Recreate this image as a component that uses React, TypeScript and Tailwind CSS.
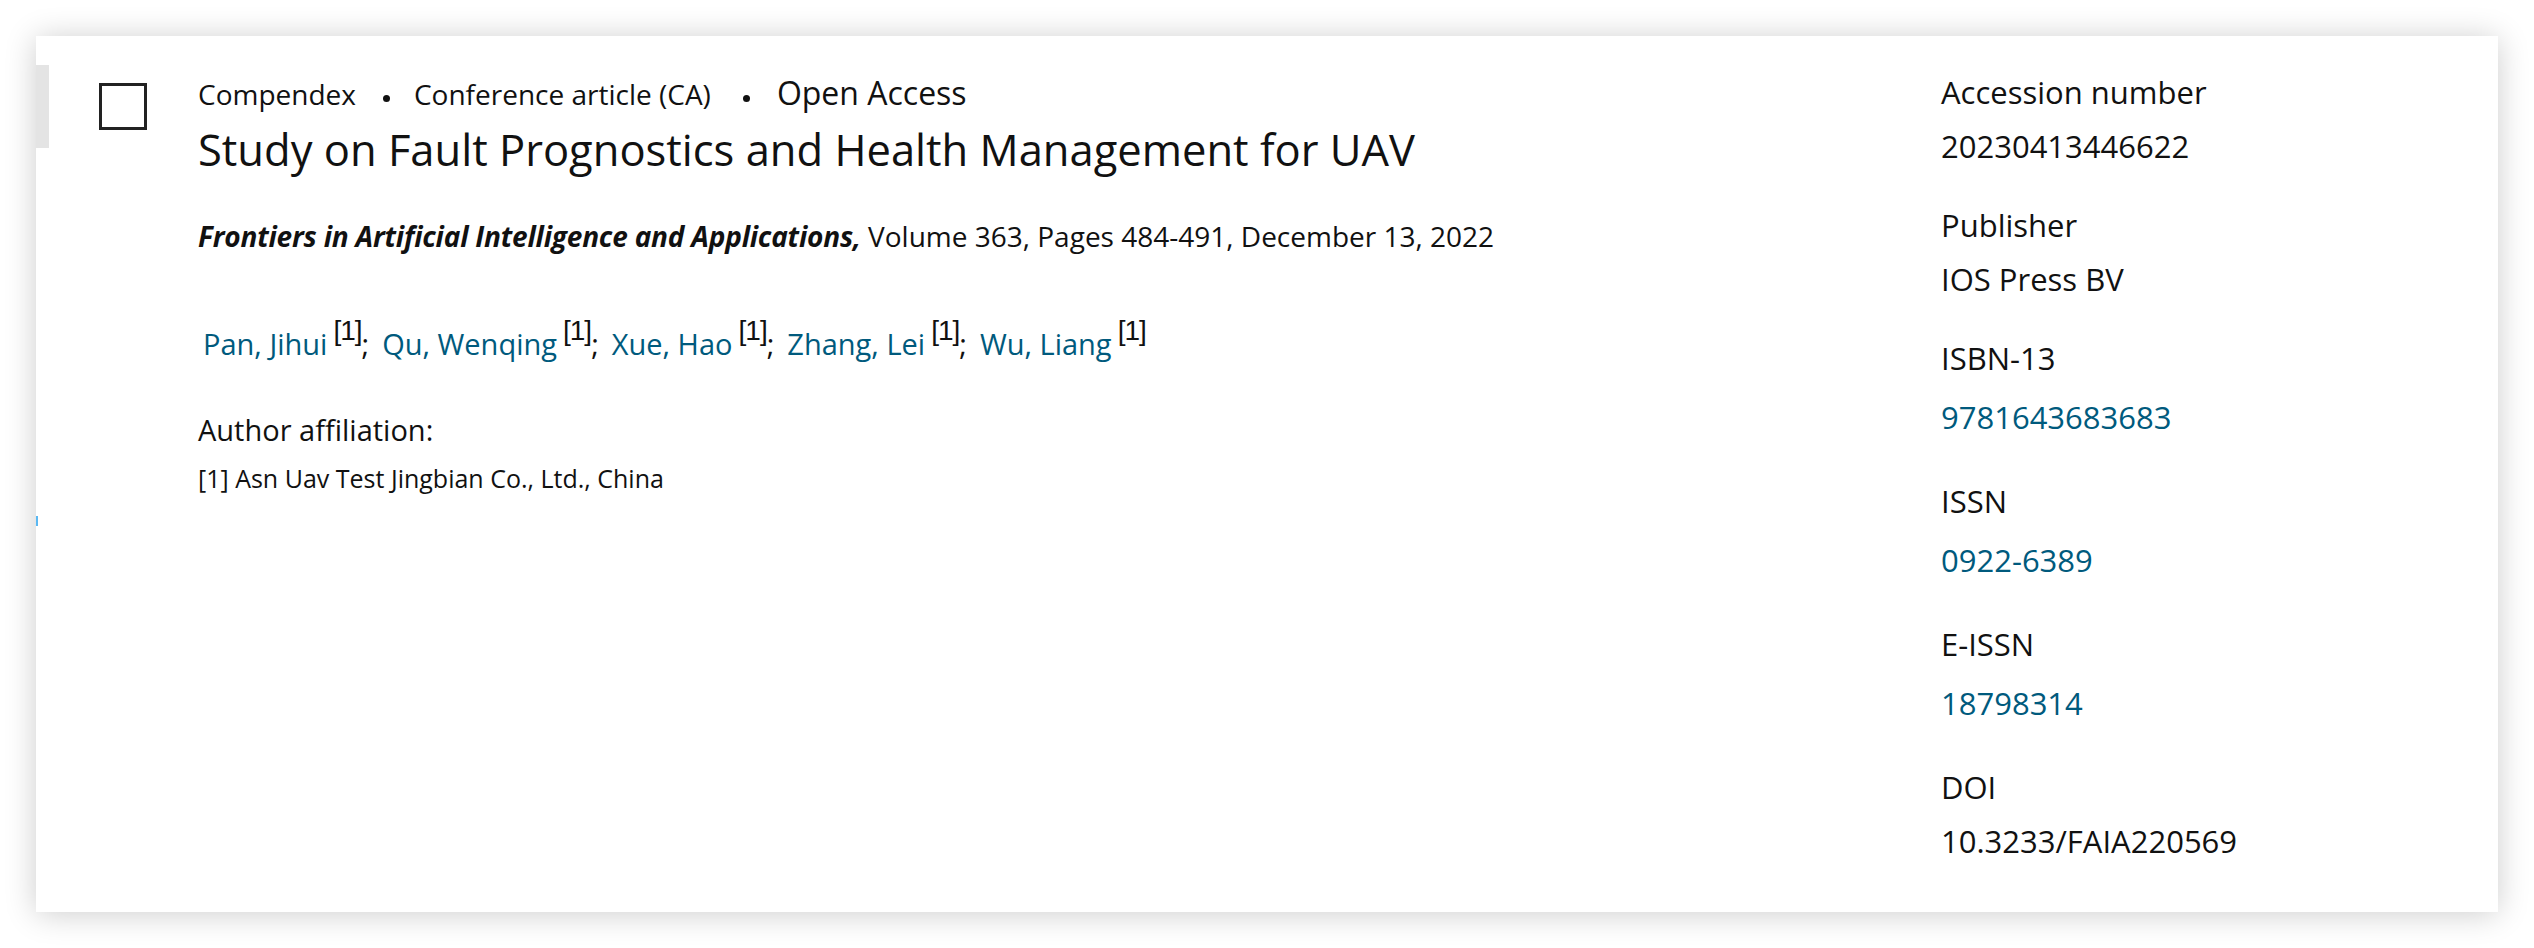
const authors = ['Pan, Jihui', 'Qu, Wenqing', 'Xue, Hao', 'Zhang, Lei', 'Wu, Liang']

const details = [
  { label: 'Accession number', value: '20230413446622', link: false },
  { label: 'Publisher', value: 'IOS Press BV', link: false },
  { label: 'ISBN-13', value: '9781643683683', link: true },
  { label: 'ISSN', value: '0922-6389', link: true },
  { label: 'E-ISSN', value: '18798314', link: true },
  { label: 'DOI', value: '10.3233/FAIA220569', link: false },
]

const App = () => {
  return (
    <div className="min-h-[948px] bg-white pl-[36px] pt-[36px] font-['Open_Sans',sans-serif] text-[#111]">
      {/* Result card */}
      <div className="relative flex h-[876px] w-[2462px] bg-white shadow-[0_2px_30px_rgba(0,0,0,0.2)]">
        <div className="absolute left-0 top-[480px] h-[10px] w-[2px] bg-[#5ab8f2]" />

        {/* Selection strip + checkbox */}
        <div className="mt-[29px] h-[83px] w-[13px] shrink-0 bg-[#e4e4e4]" />
        <div className="ml-[50px] mt-[47px] h-[47px] w-[48px] shrink-0 border-[3px] border-[#222] bg-white" />

        {/* Main content */}
        <div className="ml-[51px] flex-1 pt-[37px]">
          <div className="flex items-baseline">
            <span className="text-[28px] leading-[40px]">Compendex</span>
            <span className="relative top-[-3px] ml-[27px] mr-[24px] inline-block h-[7px] w-[7px] rounded-full bg-[#111]" />
            <span className="text-[28px] leading-[40px]">Conference article (CA)</span>
            <span className="relative top-[-3px] ml-[32px] mr-[27px] inline-block h-[7px] w-[7px] rounded-full bg-[#111]" />
            <span className="text-[32px] leading-[40px]">Open Access</span>
          </div>

          <h1 className="mt-[10px] text-[43.5px] font-normal leading-[52px]">
            Study on Fault Prognostics and Health Management for UAV
          </h1>

          <p className="mt-[40px] text-[28px] leading-[40px]">
            <span className="font-bold italic tracking-[-0.2px]">Frontiers in Artificial Intelligence and Applications,</span>{' '}
            Volume 363, Pages 484-491, December 13, 2022
          </p>

          <div className="mt-[66px] flex items-baseline pl-[5px] text-[29px] leading-[44px]">
            {authors.map((name, i) => (
              <span key={name} className={i === 0 ? 'flex items-baseline' : 'ml-[13px] flex items-baseline'}>
                <a href="#" className="text-[#005a7d]">{name}</a>
                <sup className="top-[-15px] ml-[6px] font-['Liberation_Sans',sans-serif] text-[28px] tracking-[-1px]">[1]</sup>
                {i < authors.length - 1 && <span>;</span>}
              </span>
            ))}
          </div>

          <div className="mt-[44px] text-[29px] leading-[40px]">Author affiliation:</div>
          <div className="mt-[10px] text-[25px] leading-[36px]">[1] Asn Uav Test Jingbian Co., Ltd., China</div>
        </div>

        {/* Details column */}
        <div className="w-[557px] shrink-0 pt-[29px] text-[31px] leading-[54px]">
          {details.map((d) => (
            <div key={d.label} className="mb-[25px]">
              <div>{d.label}</div>
              {d.link ? (
                <div className="py-[5px]">
                  <a href="#" className="text-[#005a7d]">{d.value}</a>
                </div>
              ) : (
                <div>{d.value}</div>
              )}
            </div>
          ))}
        </div>
      </div>
    </div>
  )
}

export default App
